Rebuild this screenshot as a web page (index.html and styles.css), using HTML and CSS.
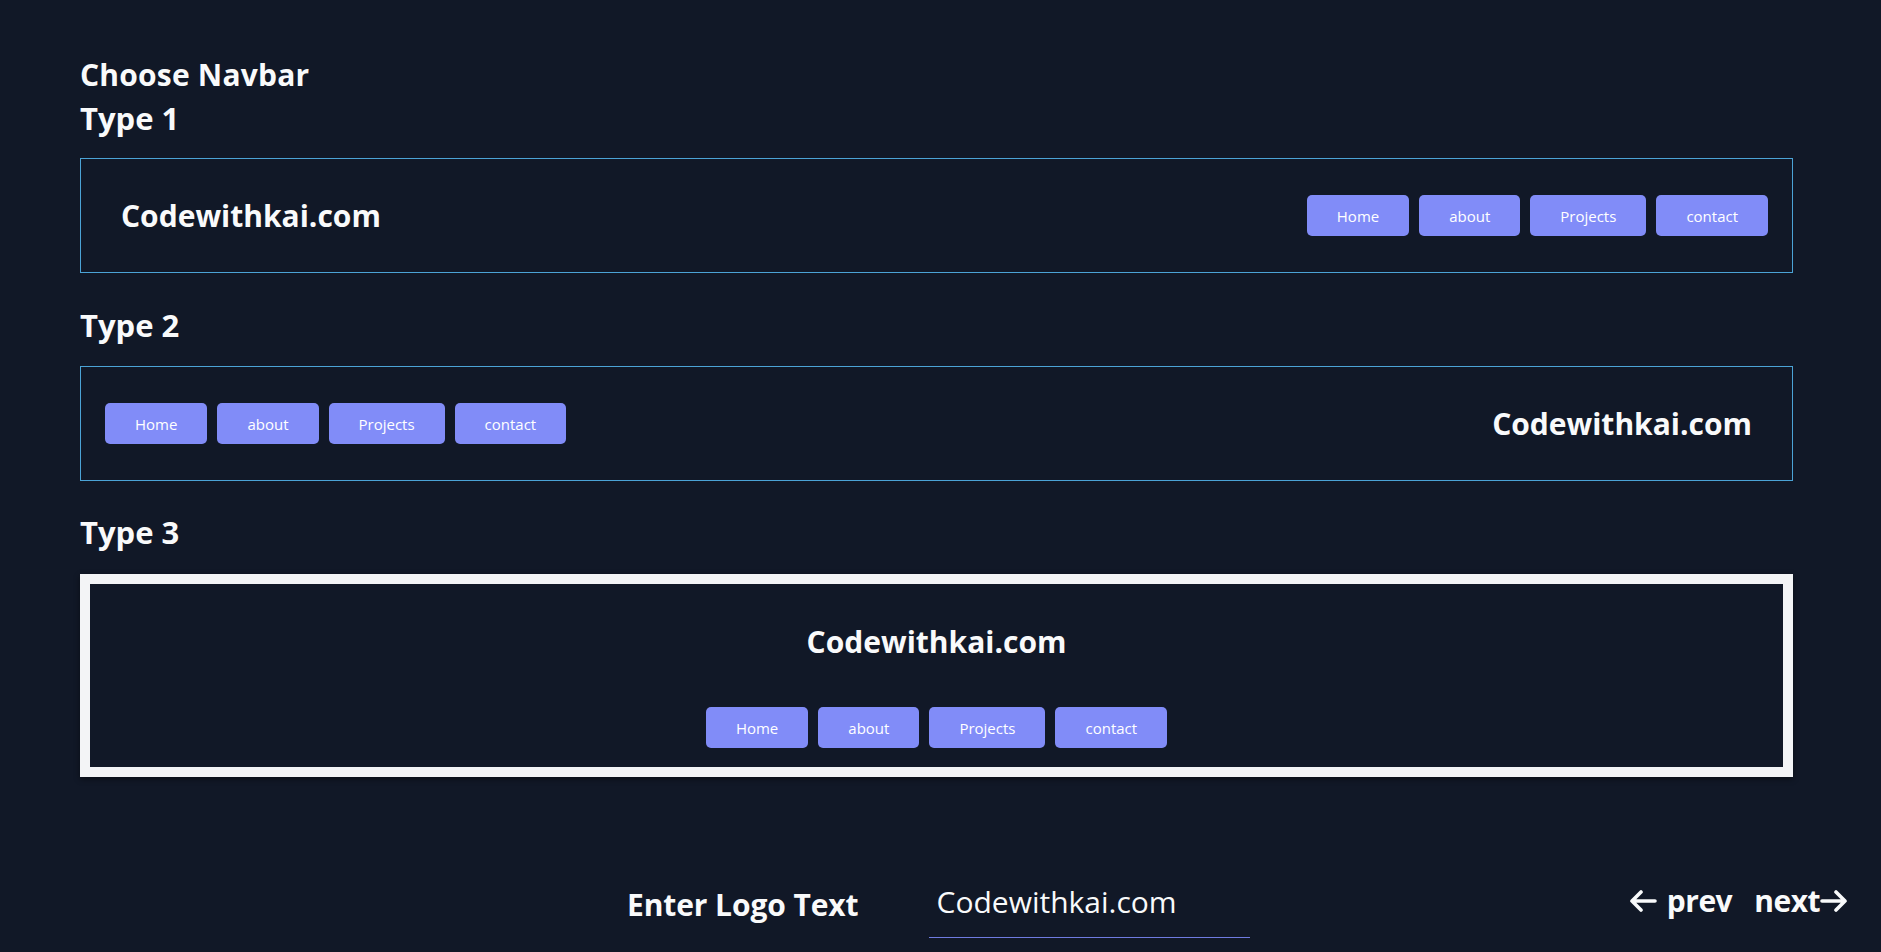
FILE: index.html
```html
<!DOCTYPE html>
<html lang="en">
<head>
<meta charset="utf-8">
<title>Choose Navbar</title>
<link rel="stylesheet" href="styles.css">
</head>
<body>
<main class="page">
  <h1 class="title">Choose Navbar</h1>

  <section class="option">
    <h2 class="type-heading first">Type 1</h2>
    <nav class="navbar navbar-row">
      <div class="logo">Codewithkai.com</div>
      <ul class="links">
        <li><a class="btn">Home</a></li>
        <li><a class="btn">about</a></li>
        <li><a class="btn">Projects</a></li>
        <li><a class="btn">contact</a></li>
      </ul>
    </nav>
  </section>

  <section class="option">
    <h2 class="type-heading">Type 2</h2>
    <nav class="navbar navbar-row">
      <ul class="links">
        <li><a class="btn">Home</a></li>
        <li><a class="btn">about</a></li>
        <li><a class="btn">Projects</a></li>
        <li><a class="btn">contact</a></li>
      </ul>
      <div class="logo">Codewithkai.com</div>
    </nav>
  </section>

  <section class="option">
    <h2 class="type-heading">Type 3</h2>
    <nav class="navbar-stack">
      <div class="logo">Codewithkai.com</div>
      <ul class="links">
        <li><a class="btn">Home</a></li>
        <li><a class="btn">about</a></li>
        <li><a class="btn">Projects</a></li>
        <li><a class="btn">contact</a></li>
      </ul>
    </nav>
  </section>
</main>

<footer class="bottom-bar">
  <div class="spacer"></div>
  <div class="logo-field">
    <label class="field-label" for="logoText">Enter Logo Text</label>
    <input class="field-input" id="logoText" type="text" value="Codewithkai.com">
  </div>
  <div class="pager">
    <a class="pager-link prev">
      <svg class="arrow" width="28" height="22" viewBox="0 0 28 22" aria-hidden="true">
        <path d="M26 11H3M12 2L3 11L12 20" fill="none" stroke="#f9fafb" stroke-width="3.6" stroke-linecap="round" stroke-linejoin="round"/>
      </svg>
      <span>prev</span>
    </a>
    <a class="pager-link next">
      <span>next</span>
      <svg class="arrow" width="28" height="22" viewBox="0 0 28 22" aria-hidden="true">
        <path d="M2 11H25M16 2L25 11L16 20" fill="none" stroke="#f9fafb" stroke-width="3.6" stroke-linecap="round" stroke-linejoin="round"/>
      </svg>
    </a>
  </div>
</footer>
</body>
</html>
```

FILE: styles.css
```css
* {
  box-sizing: border-box;
}

html, body {
  margin: 0;
  padding: 0;
  background: #111827;
}

body {
  font-family: "Open Sans", "Noto Sans", sans-serif;
  color: #f9fafb;
  min-height: 952px;
}

.page {
  padding: 57px 88px 0 80px;
}

.title,
.type-heading {
  margin: 0;
  font-size: 31px;
  line-height: 36px;
  font-weight: 700;
  letter-spacing: 0;
}

.title {
  font-size: 30px;
  letter-spacing: 0.2px;
}

.type-heading.first {
  margin-top: 7px;
}

.option .type-heading {
  margin-bottom: 22px;
}

.option + .option .type-heading {
  margin-top: 34px;
  margin-bottom: 23px;
}

.option:last-child .type-heading {
  margin-top: 33px;
  margin-bottom: 24px;
}

.navbar {
  border: 1px solid #4ba3d6;
  height: 115px;
  padding: 0 24px;
}

.navbar-row {
  display: flex;
  align-items: center;
  justify-content: space-between;
}

.logo {
  font-size: 30px;
  line-height: 36px;
  font-weight: 700;
  letter-spacing: 0;
  padding: 0 16px;
  color: #f9fafb;
}

.links {
  list-style: none;
  margin: 0;
  padding: 0;
  display: flex;
  gap: 10px;
}

.btn {
  display: flex;
  align-items: center;
  justify-content: center;
  height: 41px;
  padding: 0 30px;
  background: #818cf8;
  border-radius: 5px;
  color: #ffffff;
  font-size: 15px;
  cursor: pointer;
}

.navbar-stack {
  border: 10px solid #f3f4f6;
  height: 203px;
  display: flex;
  flex-direction: column;
  align-items: center;
  padding-top: 40px;
  gap: 47px;
  box-shadow: 0 2px 6px rgba(0, 0, 0, 0.45);
}

.bottom-bar {
  margin-top: 100px;
  display: grid;
  grid-template-columns: 627px auto 1fr;
  align-items: start;
  padding-right: 33px;
}

.logo-field {
  display: flex;
  align-items: flex-start;
  gap: 71px;
}

.field-label {
  margin-top: 10px;
  font-size: 30px;
  line-height: 36px;
  font-weight: 700;
  letter-spacing: -0.1px;
  color: #f9fafb;
}

.field-input {
  width: 321px;
  height: 61px;
  padding: 6px 7px 18px;
  border: none;
  border-bottom: 1px solid #6f7be0;
  background: transparent;
  color: #f9fafb;
  font-family: "Open Sans", "Noto Sans", sans-serif;
  font-size: 30px;
  line-height: 36px;
  outline: none;
}

.pager {
  justify-self: end;
  display: flex;
  align-items: center;
  gap: 22px;
  margin-top: 6px;
}

.pager-link {
  display: flex;
  align-items: center;
  gap: 10px;
  font-size: 30px;
  line-height: 36px;
  font-weight: 700;
  letter-spacing: -0.5px;
  color: #f9fafb;
  cursor: pointer;
}

.pager-link.next {
  gap: 0;
}

.arrow {
  display: block;
}
```
